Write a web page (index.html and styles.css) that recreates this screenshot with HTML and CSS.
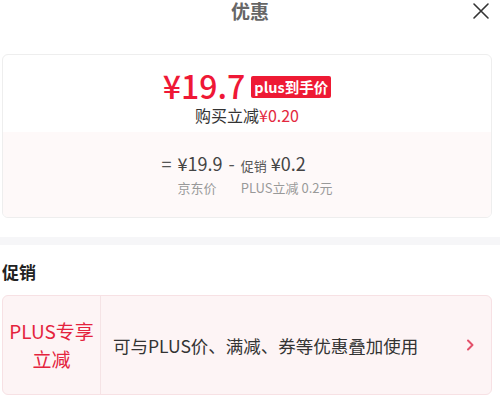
FILE: index.html
```html
<!DOCTYPE html>
<html lang="zh">
<head>
<meta charset="utf-8">
<link rel="stylesheet" href="styles.css">
</head>
<body>
<div class="page">
  <header class="header">
    <div class="title">优惠</div>
    <svg class="close" width="18" height="18" viewBox="0 0 18 18"><path d="M2 2 L16 16 M16 2 L2 16" stroke="#333" stroke-width="1.6" fill="none" stroke-linecap="round"/></svg>
  </header>

  <section class="pad">
    <div class="price-card">
      <div class="price-top">
        <div class="price-line">
          <span class="price">¥19.7</span>
          <span class="badge">plus到手价</span>
        </div>
        <div class="reduce">购买立减<span class="red">¥0.20</span></div>
      </div>
      <div class="price-bottom">
        <div class="calc">
          <span class="op">=</span>
          <div class="col">
            <span class="val">¥19.9</span>
            <span class="lbl">京东价</span>
          </div>
          <span class="op">-</span>
          <div class="col">
            <span class="val"><span class="small">促销</span> ¥0.2</span>
            <span class="lbl">PLUS立减 0.2元</span>
          </div>
        </div>
      </div>
    </div>
  </section>

  <div class="divider"></div>

  <section class="pad">
    <h2 class="sec-title">促销</h2>
    <div class="promo">
      <div class="promo-tag">PLUS专享<br>立减</div>
      <div class="promo-text">可与PLUS价、满减、券等优惠叠加使用</div>
      <svg class="chev" width="10" height="14" viewBox="0 0 10 14"><path d="M3 2.5 L7.5 7 L3 11.5" stroke="#e3506a" stroke-width="2" fill="none" stroke-linecap="round" stroke-linejoin="round"/></svg>
    </div>
  </section>
</div>
</body>
</html>
```

FILE: styles.css
```css
* { box-sizing: border-box; margin: 0; padding: 0; }
html, body { background: #fff; }
body {
  width: 500px;
  height: 406px;
  overflow: hidden;
  font-family: "Noto Sans CJK SC", "Noto Sans", sans-serif;
  color: #333;
}
.header {
  height: 54px;
  position: relative;
  display: flex;
  justify-content: center;
}
.title {
  font-size: 19px;
  font-weight: 700;
  color: #666;
  line-height: 22px;
}
.close {
  position: absolute;
  right: 10px;
  top: 2px;
}
.pad { padding: 0 8px 0 2px; }
.price-card {
  border: 1px solid #eeeeee;
  border-radius: 6px;
  overflow: hidden;
}
.price-top {
  height: 77px;
  display: flex;
  flex-direction: column;
  align-items: center;
  padding-top: 14px;
}
.price-line {
  display: flex;
  align-items: center;
  gap: 6px;
  height: 32px;
}
.price {
  font-size: 32px;
  font-weight: 500;
  color: #ef1836;
  line-height: 32px;
}
.badge {
  background: #ee1a34;
  color: #fff;
  font-size: 14.5px;
  font-weight: 700;
  line-height: 22px;
  height: 22px;
  padding: 0 3px;
  border-radius: 2px;
  margin-top: 3px;
}
.reduce {
  font-size: 16px;
  line-height: 22px;
  margin-top: 3px;
  color: #333;
}
.red { color: #e3283e; }
.price-bottom {
  background: #fef9f9;
  height: 85px;
  display: flex;
  justify-content: center;
  padding-top: 20px;
}
.calc {
  display: flex;
  align-items: flex-start;
  gap: 6px;
}
.col {
  display: flex;
  flex-direction: column;
  gap: 5px;
}
.op { font-size: 18px; color: #555; line-height: 22px; }
.val { font-size: 18px; color: #444; line-height: 22px; height: 22px; }
.small { font-size: 13px; color: #555; line-height: 1; }
.lbl { font-size: 13px; color: #999; line-height: 18px; }
.divider {
  height: 8px;
  background: #f6f6f8;
  margin-top: 19px;
}
.sec-title {
  font-size: 17px;
  font-weight: 700;
  color: #222;
  line-height: 24px;
  margin-top: 15px;
  margin-bottom: 11px;
}
.promo {
  height: 100px;
  background: #fdf4f5;
  border: 1px solid #f7e1e4;
  border-radius: 6px;
  display: flex;
  align-items: center;
}
.promo-tag {
  width: 98px;
  height: 100%;
  border-right: 1px solid #f5e3e5;
  display: flex;
  align-items: center;
  justify-content: center;
  text-align: center;
  color: #e4233d;
  font-size: 19px;
  line-height: 28px;
}
.promo-text {
  flex: 1;
  padding-left: 12px;
  font-size: 17.5px;
  color: #333;
}
.chev { margin-right: 16px; }
```
